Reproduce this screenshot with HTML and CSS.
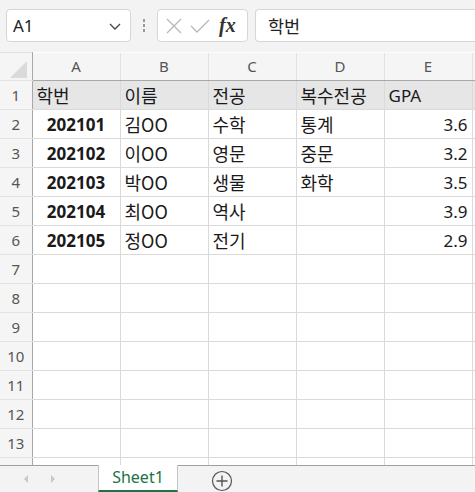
FILE: index.html
```html
<!DOCTYPE html>
<html>
<head>
 <meta charset="utf-8"/>
 <title>Sheet1</title>
<link rel="stylesheet" href="styles.css">
</head>
<body>
<div class="toolbar">
 <div class="namebox">
  <span>A1</span>
  <svg class="chev" width="14" height="10" viewBox="0 0 14 10"><path d="M2 3 L7 8 L12 3" fill="none" stroke="#444" stroke-width="1.3"/></svg>
 </div>
 <div class="grip"><i></i><i></i><i></i></div>
 <div class="fxbox">
  <svg width="18" height="18" viewBox="0 0 18 18"><path d="M2 2 L16 16 M16 2 L2 16" stroke="#b8b8b8" stroke-width="1.3" fill="none"/></svg>
  <svg width="22" height="18" viewBox="0 0 22 18"><path d="M2 9 L8 15 L20 3" stroke="#b8b8b8" stroke-width="1.3" fill="none"/></svg>
  <span class="fx">fx</span>
 </div>
 <div class="formula">학번</div>
</div>

<table class="sheet">
<colgroup>
 <col class="rh"><col class="c"><col class="c"><col class="c"><col class="c"><col class="c"><col class="cf">
</colgroup>
<tr class="colhead">
 <th class="corner"><svg width="31" height="27" viewBox="0 0 31 27"><path d="M27 8 L27 25 L10 25 Z" fill="#dadada"/></svg></th>
 <th>A</th><th>B</th><th>C</th><th>D</th><th>E</th><th class="f"></th>
</tr>
<tr class="fill"><th>1</th><td>학번</td><td>이름</td><td>전공</td><td>복수전공</td><td class="lat">GPA</td><td class="f"></td></tr>
<tr><th>2</th><td class="id">202101</td><td>김OO</td><td>수학</td><td>통계</td><td class="num">3.6</td><td class="f"></td></tr>
<tr><th>3</th><td class="id">202102</td><td>이OO</td><td>영문</td><td>중문</td><td class="num">3.2</td><td class="f"></td></tr>
<tr><th>4</th><td class="id">202103</td><td>박OO</td><td>생물</td><td>화학</td><td class="num">3.5</td><td class="f"></td></tr>
<tr><th>5</th><td class="id">202104</td><td>최OO</td><td>역사</td><td></td><td class="num">3.9</td><td class="f"></td></tr>
<tr><th>6</th><td class="id">202105</td><td>정OO</td><td>전기</td><td></td><td class="num">2.9</td><td class="f"></td></tr>
<tr><th>7</th><td></td><td></td><td></td><td></td><td></td><td class="f"></td></tr>
<tr><th>8</th><td></td><td></td><td></td><td></td><td></td><td class="f"></td></tr>
<tr><th>9</th><td></td><td></td><td></td><td></td><td></td><td class="f"></td></tr>
<tr><th>10</th><td></td><td></td><td></td><td></td><td></td><td class="f"></td></tr>
<tr><th>11</th><td></td><td></td><td></td><td></td><td></td><td class="f"></td></tr>
<tr><th>12</th><td></td><td></td><td></td><td></td><td></td><td class="f"></td></tr>
<tr><th>13</th><td></td><td></td><td></td><td></td><td></td><td class="f"></td></tr>
<tr class="part"><th></th><td></td><td></td><td></td><td></td><td></td><td class="f"></td></tr>
</table>

<div class="tabbar">
 <div class="arrows">
  <svg width="8" height="10" viewBox="0 0 8 10"><path d="M6 1 L2 5 L6 9 Z" fill="#c8c8c8"/></svg>
  <svg width="8" height="10" viewBox="0 0 8 10"><path d="M2 1 L6 5 L2 9 Z" fill="#c8c8c8"/></svg>
 </div>
 <div class="tab">Sheet1</div>
 <svg class="plus" width="22" height="22" viewBox="0 0 22 22"><circle cx="11" cy="11" r="9.5" fill="none" stroke="#555" stroke-width="1.2"/><path d="M11 5.5 V16.5 M5.5 11 H16.5" stroke="#555" stroke-width="1.4"/></svg>
</div>
</body>
</html>
```

FILE: styles.css
```css
html, body {
 margin: 0;
 padding: 0;
}

body {
 width: 475px;
 height: 492px;
 overflow: hidden;
 background: #f3f3f3;
 font-family: "Noto Sans", "Noto Sans CJK KR", sans-serif;
 color: #222;
}

.toolbar {
 height: 52px;
 display: flex;
 align-items: flex-start;
 padding-top: 9px;
 padding-left: 6px;
 box-sizing: border-box;
 white-space: nowrap;
}
.toolbar > * { flex-shrink: 0; }

.namebox {
 width: 125px;
 height: 33px;
 box-sizing: border-box;
 background: #fff;
 border: 1px solid #d6d6d6;
 border-radius: 4px;
 display: flex;
 align-items: center;
 justify-content: space-between;
 padding: 0 8px 0 6px;
 font-size: 17px;
 color: #222;
}

.grip {
 width: 26px;
 height: 33px;
 display: flex;
 flex-direction: column;
 align-items: center;
 justify-content: center;
 gap: 2px;
}
.grip i {
 display: block;
 width: 2px;
 height: 3px;
 background: #9a9a9a;
}

.fxbox {
 width: 91px;
 height: 33px;
 box-sizing: border-box;
 background: #fff;
 border: 1px solid #d6d6d6;
 border-radius: 4px;
 display: flex;
 align-items: center;
 gap: 6px;
 padding-left: 7px;
}
.fx {
 font-family: "Liberation Serif", "DejaVu Serif", serif;
 font-style: italic;
 font-weight: bold;
 font-size: 20px;
 color: #333;
 margin-left: 2px;
}

.formula {
 margin-left: 7px;
 width: 230px;
 height: 33px;
 box-sizing: border-box;
 background: #fff;
 border: 1px solid #d6d6d6;
 border-right: none;
 border-radius: 4px 0 0 4px;
 font-family: "Noto Sans CJK KR", sans-serif;
 font-size: 17.5px;
 line-height: 31px;
 padding-left: 12px;
 color: #222;
}

.sheet {
 border-collapse: collapse;
 table-layout: fixed;
 width: 485px;
 background: #fff;
}
col.rh { width: 32px; }
col.c { width: 88px; }
col.cf { width: 13px; }

.sheet th, .sheet td {
 padding: 0;
 border: 1px solid #dadada;
 height: 29px;
 box-sizing: border-box;
 white-space: nowrap;
 overflow: hidden;
}

.sheet td {
 padding: 0 4px;
 font-family: "Noto Sans CJK KR", sans-serif;
 font-size: 18px;
 color: #1a1a1a;
 vertical-align: middle;
}

.colhead th {
 background: #f5f5f5;
 font-family: "Noto Sans", sans-serif;
 font-weight: normal;
 font-size: 15px;
 color: #555;
 height: 28px;
 border-top: none;
 border-bottom: 1px solid #a8a8a8;
 border-left: 1px solid #e2e2e2;
 border-right: 1px solid #e2e2e2;
}
.colhead th.corner {
 padding: 0;
 vertical-align: top;
}
.colhead th.corner svg { display: block; }

.sheet tr > th:first-child {
 background: #f5f5f5;
 font-family: "Noto Sans", sans-serif;
 font-weight: normal;
 font-size: 15px;
 color: #555;
 border-left: none;
 border-right: 1px solid #a8a8a8;
 border-top: 1px solid #e2e2e2;
 border-bottom: 1px solid #e2e2e2;
}
.colhead th.corner { border-right: 1px solid #e2e2e2; }

.fill td { background: #e6e6e6; }

.sheet td.id {
 font-family: "Noto Sans", sans-serif;
 font-weight: bold;
 font-size: 17px;
 text-align: center;
}
.sheet td.num, .sheet td.lat {
 font-family: "Noto Sans", sans-serif;
 font-size: 17px;
}
.sheet td.num { text-align: right; }

.sheet tr.part th, .sheet tr.part td {
 height: 7px;
 border-bottom: none;
}

.tabbar {
 height: 28px;
 border-top: 1px solid #a0a0a0;
 background: #f3f3f3;
 display: flex;
 align-items: flex-start;
}
.arrows {
 width: 98px;
 height: 27px;
 display: flex;
 align-items: center;
 gap: 19px;
 padding-left: 22px;
 box-sizing: border-box;
}
.tab {
 width: 78px;
 height: 25px;
 margin-top: -1px;
 background: #fff;
 border: 1px solid #c4c4c4;
 border-top: none;
 border-bottom: 2px solid #217346;
 font-family: "Noto Sans", sans-serif;
 font-size: 16px;
 color: #217346;
 text-align: center;
 line-height: 25px;
}
.plus {
 margin-left: 33px;
 margin-top: 4px;
}
```
